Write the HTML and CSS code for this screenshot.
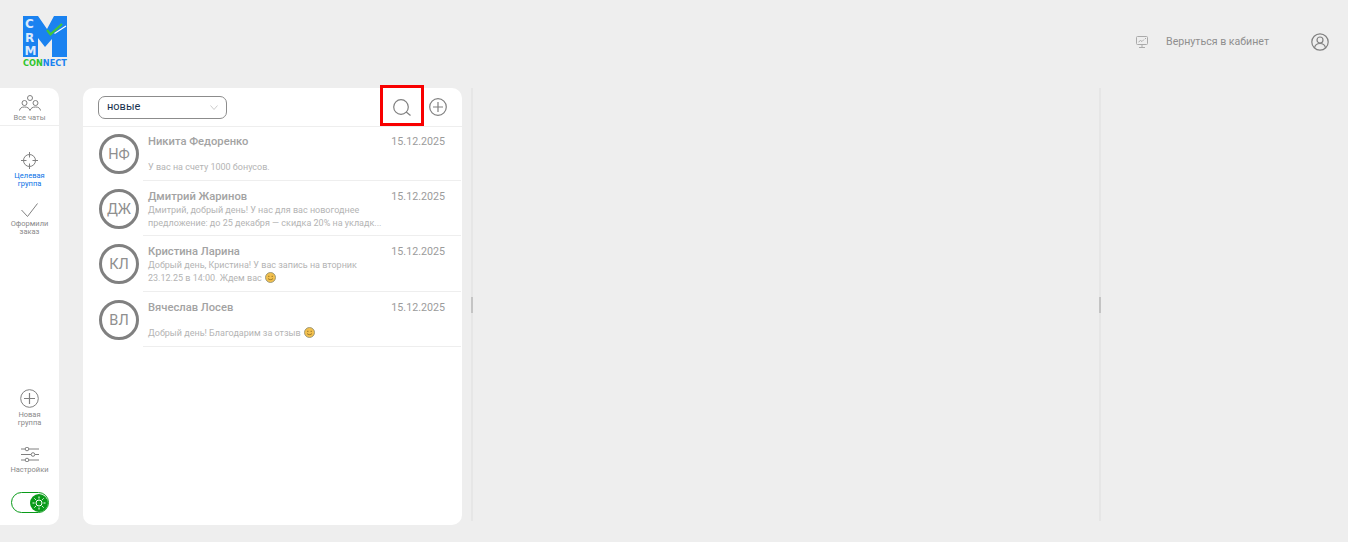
FILE: index.html
```html
<!DOCTYPE html>
<html lang="ru">
<head>
    <meta charset="UTF-8">
    <meta name="viewport" content="width=device-width, initial-scale=1.0">
    <title>CRM Connect</title>
    <link rel="stylesheet" href="styles.css">
</head>
<body>
    <header class="topbar">
        <div class="logo">
            <svg class="logo-mark" width="44" height="41" viewBox="0 0 44 41">
                <polygon points="0,0 15,0 24,13 31,0 44,0 44,41 29,41 29,23 22,31 15,22 15,41 0,41" fill="#1a82f0"/>
                <text class="logo-crm" x="2" y="11.500">C</text>
                <text class="logo-crm" x="2" y="25.500">R</text>
                <text class="logo-crm" x="1.500" y="39">M</text>
                <path d="M24 14l3.500 4.300L39 8" fill="none" stroke="#3fc83a" stroke-width="2.200"/>
                <path d="M31.500 17.500L43 10" fill="none" stroke="#ffffff" stroke-width="1.100"/>
            </svg>
            <div class="logo-name"><span class="green">CON</span><span class="blue">NECT</span></div>
        </div>
        <div class="cabinet">
            <svg width="12" height="12" viewBox="0 0 12 12" fill="none" stroke="#aaaaaa" stroke-width="1">
                <rect x="0.500" y="0.500" width="11" height="8" rx="1"/>
                <path d="M6 9v2M3 11.500h6M2.500 6l2-1.500 1.500 1 2-2M9 2.500h1"/>
            </svg>
            <span class="cabinet-link">Вернуться в кабинет</span>
            <svg class="user-icon" width="18" height="18" viewBox="0 0 18 18" fill="none" stroke="#808080" stroke-width="1.200">
                <circle cx="9" cy="9" r="8.200"/>
                <circle cx="9" cy="7" r="3"/>
                <path d="M3.500 15c.5-3 2.500-4.500 5.500-4.500s5 1.500 5.500 4.500"/>
            </svg>
        </div>
    </header>

    <main class="workspace">
        <nav class="sidebar">
            <div class="side-top">
                <div class="side-item side-all">
                    <svg width="22" height="16" viewBox="0 0 22 16" fill="none" stroke="#808080" stroke-width="1">
                        <circle cx="11" cy="3" r="2.500"/>
                        <circle cx="5.500" cy="8" r="2.500"/>
                        <circle cx="16.500" cy="8" r="2.500"/>
                        <path d="M0.500 15.500c.5-2.500 2-3.500 5-3.500s4.500 1 5.500 3.500c1-2.500 2.500-3.500 5.500-3.500s4.500 1 5 3.500"/>
                    </svg>
                    <span>Все чаты</span>
                </div>
                <div class="side-item side-target">
                    <svg width="17" height="17" viewBox="0 0 17 17" fill="none" stroke="#808080" stroke-width="1">
                        <circle cx="8.500" cy="8.500" r="6"/>
                        <path d="M8.500 0v5.500M8.500 11.500V17M0 8.500h5.500M11.500 8.500H17"/>
                    </svg>
                    <span class="active">Целевая группа</span>
                </div>
                <div class="side-item side-order">
                    <svg width="17" height="14" viewBox="0 0 17 14" fill="none" stroke="#808080" stroke-width="1">
                        <path d="M0.500 7l6 6.500L16.500 0.500"/>
                    </svg>
                    <span>Оформили заказ</span>
                </div>
            </div>
            <div class="side-bottom">
                <div class="side-item side-new">
                    <svg width="19" height="19" viewBox="0 0 19 19" fill="none" stroke="#808080" stroke-width="1">
                        <circle cx="9.500" cy="9.500" r="8.800"/>
                        <path d="M9.500 4v11M4 9.500h11" stroke-width="1.200"/>
                    </svg>
                    <span>Новая группа</span>
                </div>
                <div class="side-item side-settings">
                    <svg width="18" height="15" viewBox="0 0 18 15" fill="none" stroke="#808080" stroke-width="1">
                        <path d="M0 2h4M8 2h10M0 7.500h10M14 7.500h4M0 13h4M8 13h10"/>
                        <circle cx="6" cy="2" r="1.800"/>
                        <circle cx="12" cy="7.500" r="1.800"/>
                        <circle cx="6" cy="13" r="1.800"/>
                    </svg>
                    <span>Настройки</span>
                </div>
                <div class="toggle">
                    <div class="toggle-knob">
                        <svg width="14" height="14" viewBox="0 0 14 14" fill="none" stroke="#ffffff" stroke-width="1">
                            <circle cx="7" cy="7" r="3"/>
                            <path d="M7 0.500v2M7 11.500v2M0.500 7h2M11.500 7h2M2.400 2.400l1.400 1.400M10.200 10.200l1.400 1.400M2.400 11.600l1.400-1.400M10.200 3.800l1.400-1.400"/>
                        </svg>
                    </div>
                </div>
            </div>
        </nav>

        <section class="chat-list">
            <div class="list-head">
                <div class="status-select">
                    <span>новые</span>
                    <svg width="8" height="5" viewBox="0 0 8 5" fill="none" stroke="#cccccc" stroke-width="1">
                        <path d="M0.500 0.500L4 4.500l3.500-4"/>
                    </svg>
                </div>
                <div class="list-actions">
                    <svg width="18" height="17" viewBox="0 0 18 17" fill="none" stroke="#808080" stroke-width="1.200">
                        <circle cx="8" cy="8" r="7.300"/>
                        <path d="M13.200 13l4.300 3.500"/>
                    </svg>
                    <svg width="18" height="18" viewBox="0 0 18 18" fill="none" stroke="#808080" stroke-width="1.200">
                        <circle cx="9" cy="9" r="8.300"/>
                        <path d="M9 4v10M4 9h10"/>
                    </svg>
                </div>
                <div class="search-mark"></div>
            </div>

            <article class="chat-row">
                <div class="avatar">НФ</div>
                <div class="chat-body">
                    <div class="chat-top"><b>Никита Федоренко</b><time>15.12.2025</time></div>
                    <p class="chat-text chat-text-low">У вас на счету 1000 бонусов.</p>
                </div>
            </article>
            <article class="chat-row">
                <div class="avatar">ДЖ</div>
                <div class="chat-body">
                    <div class="chat-top"><b>Дмитрий Жаринов</b><time>15.12.2025</time></div>
                    <p class="chat-text">Дмитрий, добрый день! У нас для вас новогоднее<br>предложение: до 25 декабря — скидка 20% на укладк...</p>
                </div>
            </article>
            <article class="chat-row chat-row-tall">
                <div class="avatar">КЛ</div>
                <div class="chat-body">
                    <div class="chat-top"><b>Кристина Ларина</b><time>15.12.2025</time></div>
                    <p class="chat-text">Добрый день, Кристина! У вас запись на вторник<br>23.12.25 в 14:00. Ждем вас
                        <svg class="smile" width="11" height="11" viewBox="0 0 11 11"><circle cx="5.500" cy="5.500" r="5" fill="#f2c04e" stroke="#8a8a70" stroke-width="0.800"/><path d="M3 6.500c1 1.500 4 1.500 5 0" fill="none" stroke="#8a6a20" stroke-width="0.800"/><path d="M3 4.300h1.500M6.500 4.300H8" stroke="#8a6a20" stroke-width="0.800"/></svg>
                    </p>
                </div>
            </article>
            <article class="chat-row">
                <div class="avatar">ВЛ</div>
                <div class="chat-body">
                    <div class="chat-top"><b>Вячеслав Лосев</b><time>15.12.2025</time></div>
                    <p class="chat-text chat-text-low">Добрый день! Благодарим за отзыв
                        <svg class="smile" width="11" height="11" viewBox="0 0 11 11"><circle cx="5.500" cy="5.500" r="5" fill="#f2c04e" stroke="#8a8a70" stroke-width="0.800"/><path d="M3 6.500c1 1.500 4 1.500 5 0" fill="none" stroke="#8a6a20" stroke-width="0.800"/><path d="M3 4.300h1.500M6.500 4.300H8" stroke="#8a6a20" stroke-width="0.800"/></svg>
                    </p>
                </div>
            </article>
        </section>

        <div class="pane-line"><i></i></div>
        <section class="pane-chat"></section>
        <div class="pane-line"><i></i></div>
        <section class="pane-info"></section>
    </main>
</body>
</html>
```

FILE: styles.css
```css
* {
    box-sizing: border-box;
}
body {
    font-family: 'Roboto', 'Liberation Sans', sans-serif;
    background-color: #eeeeee;
    margin: 0;
    height: 100vh;
    display: flex;
    flex-direction: column;
    overflow: hidden;
}

/* top bar */
.topbar {
    height: 88px;
    flex: none;
    display: flex;
    justify-content: space-between;
    padding: 16px 19px 0 23px;
}
.logo {
    width: 44px;
}
.logo-mark {
    display: block;
}
.logo-crm {
    font-family: 'DejaVu Sans', sans-serif;
    font-size: 12px;
    font-weight: 700;
    fill: #ffffff;
    fill-opacity: 0.85;
}
.logo-name {
    font-family: 'DejaVu Sans', sans-serif;
    font-size: 8.200px;
    font-weight: 700;
    line-height: 8px;
    margin-top: 2px;
    white-space: nowrap;
}
.green {
    color: #2fc42c;
}
.blue {
    color: #1a82f0;
}
.cabinet {
    display: flex;
    align-items: center;
    height: 18px;
    margin-top: 17px;
}
.cabinet-link {
    font-size: 10.600px;
    color: #8f8f8f;
    margin-left: 18px;
    padding-bottom: 1px;
}
.user-icon {
    margin-left: 42px;
}

/* main area */
.workspace {
    flex: 1;
    display: flex;
    padding-bottom: 17px;
    min-height: 0;
}
.sidebar {
    width: 59px;
    flex: none;
    background-color: white;
    border-radius: 0 10px 10px 0;
    display: flex;
    flex-direction: column;
    justify-content: space-between;
}
.side-item {
    display: flex;
    flex-direction: column;
    align-items: center;
    text-align: center;
    font-size: 7.500px;
    line-height: 8px;
    color: #8a8a8a;
}
.side-item span {
    display: block;
    width: 52px;
}
.side-item .active {
    color: #0a72e6;
}
.side-all {
    height: 38px;
    padding-top: 7px;
    border-bottom: 1px solid #eeeeee;
}
.side-all span {
    margin-top: 3px;
}
.side-target {
    margin-top: 26px;
}
.side-target span {
    margin-top: 3px;
    padding: 0 8px;
}
.side-order {
    margin-top: 15px;
}
.side-order span {
    margin-top: 3px;
    line-height: 7.500px;
}
.side-new span {
    margin-top: 3px;
    padding: 0 8px;
}
.side-settings {
    margin-top: 20px;
}
.side-settings span {
    margin-top: 4px;
}
.toggle {
    width: 38px;
    height: 21px;
    margin: 18px 0 12px 11px;
    border: 1px solid #0a9b1a;
    border-radius: 11px;
    display: flex;
    justify-content: flex-end;
    align-items: center;
}
.toggle-knob {
    width: 18px;
    height: 18px;
    border-radius: 50%;
    background-color: #0a9b1a;
    display: flex;
    align-items: center;
    justify-content: center;
}

/* chat list */
.chat-list {
    width: 379px;
    flex: none;
    margin-left: 24px;
    background-color: white;
    border-radius: 10px;
}
.list-head {
    position: relative;
    height: 38px;
    display: flex;
    align-items: center;
    justify-content: space-between;
    padding: 0 15px;
    box-shadow: 0 1px 0 #eeeeee;
}
.status-select {
    width: 129px;
    height: 23px;
    border: 1px solid #8c8c8c;
    border-radius: 7px;
    display: flex;
    align-items: center;
    justify-content: space-between;
    padding: 0 8px;
    font-size: 11px;
    color: #17324f;
}
.status-select span {
    padding-bottom: 1px;
}
.list-actions {
    display: flex;
    align-items: center;
    gap: 18px;
}
.search-mark {
    position: absolute;
    left: 297px;
    top: -3px;
    width: 44px;
    height: 41px;
    border: 3px solid #f80000;
}
.chat-row {
    display: flex;
    height: 55px;
    padding-left: 16px;
}
.chat-row-tall {
    height: 56px;
}
.avatar {
    width: 40px;
    height: 40px;
    flex: none;
    margin-top: 8px;
    border: 3.500px solid #808080;
    border-radius: 50%;
    display: flex;
    align-items: center;
    justify-content: center;
    font-size: 14.500px;
    color: #8f8f8f;
}
.chat-body {
    flex: 1;
    margin: 0 1px 0 4px;
    padding: 9px 16px 0 5px;
    border-bottom: 1px solid #eeeeee;
    display: flex;
    flex-direction: column;
}
.chat-top {
    display: flex;
    justify-content: space-between;
    font-size: 10.700px;
    line-height: 13px;
    color: #9b9b9b;
}
.chat-top b {
    font-size: 11.200px;
    font-weight: 500;
    line-height: 14px;
    color: #a3a3a3;
}
.chat-text {
    margin: 0;
    font-size: 9px;
    line-height: 13px;
    color: #b4b4b4;
}
.chat-text-low {
    margin-top: auto;
    padding-bottom: 6px;
}
.smile {
    vertical-align: -2px;
    margin-left: 1px;
}

/* empty panes */
.pane-line {
    width: 2px;
    flex: none;
    margin: 0 0 4px 9px;
    background-color: #e6e6e6;
    display: flex;
    align-items: center;
}
.pane-line i {
    display: block;
    width: 2px;
    height: 16px;
    background-color: #c4c4c4;
}
.pane-chat {
    width: 626px;
    flex: none;
}
.pane-line + .pane-chat + .pane-line {
    margin-left: 0;
}
.pane-info {
    flex: 1;
}
```
